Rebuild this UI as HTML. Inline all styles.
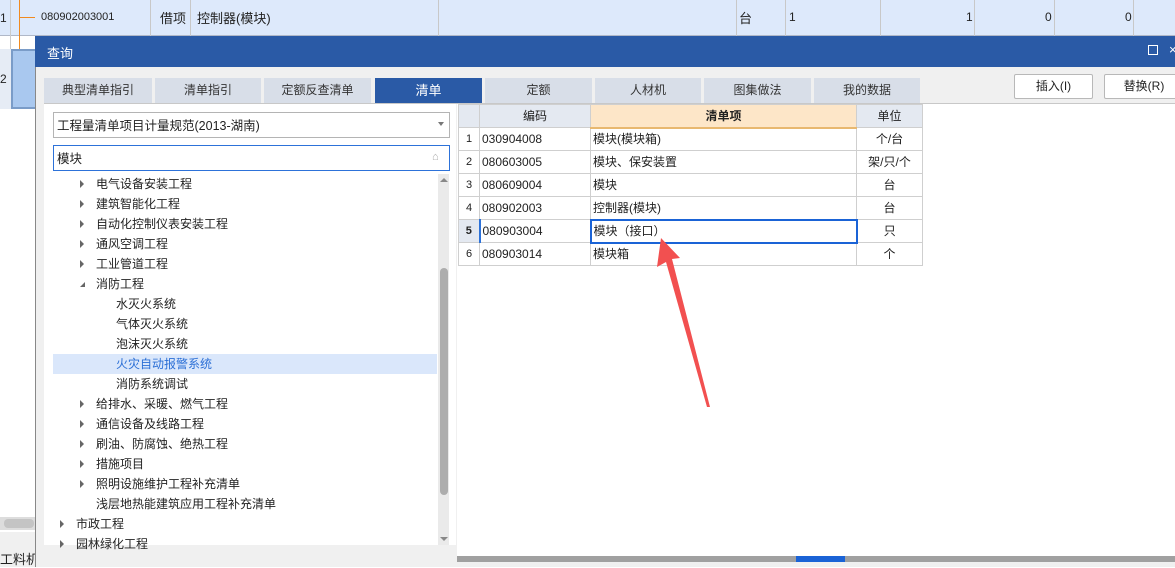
<!DOCTYPE html>
<html><head><meta charset="utf-8"><style>
*{margin:0;padding:0;box-sizing:border-box}
body{width:1175px;height:567px;overflow:hidden;background:#fff;position:relative;font-family:"Liberation Sans","Noto Sans CJK SC",sans-serif;font-size:12px;color:#222}
.a{position:absolute}
.tab{position:absolute;top:78px;height:25px;background:#d8dee8;color:#333;text-align:center;line-height:25px;font-size:12px}
.tr{position:absolute;height:20px;line-height:20px;font-size:12px;color:#222;white-space:nowrap}
.tri{position:absolute;width:0;height:0;border-left:4px solid #666;border-top:4px solid transparent;border-bottom:4px solid transparent;top:6px}
table{border-collapse:collapse;position:absolute;left:458px;top:104px;font-size:12px}
td{border:1px solid #cfcfcf;height:23px;padding:0 2px;white-space:nowrap;line-height:20px}
.btn{position:absolute;top:74px;height:25px;border:1px solid #b8b8b8;background:#fff;text-align:center;line-height:23px;border-radius:2px}
</style></head><body>
<div class="a" style="left:0;top:0;width:1175px;height:36px;background:#dde9fb;border-bottom:1px solid #b0b8c8"></div>
<div class="a" style="left:0;top:11px">1</div>
<div class="a" style="left:10px;top:0;width:1px;height:108px;background:#ccc"></div>
<div class="a" style="left:19px;top:0;width:1px;height:80px;background:#f08a20"></div>
<div class="a" style="left:19px;top:17px;width:16px;height:1px;background:#f08a20"></div>
<div class="a" style="left:41px;top:11px;font-size:11px">080902003001</div>
<div class="a" style="left:150px;top:0;width:1px;height:36px;background:#c8c8c8"></div>
<div class="a" style="left:160px;top:8px;font-size:13px">借项</div>
<div class="a" style="left:190px;top:0;width:1px;height:36px;background:#c8c8c8"></div>
<div class="a" style="left:197px;top:8px;font-size:13px">控制器(模块)</div>
<div class="a" style="left:438px;top:0;width:1px;height:36px;background:#c8c8c8"></div>
<div class="a" style="left:736px;top:0;width:1px;height:36px;background:#c8c8c8"></div>
<div class="a" style="left:739px;top:8px;font-size:13px">台</div>
<div class="a" style="left:785px;top:0;width:1px;height:36px;background:#c8c8c8"></div>
<div class="a" style="left:789px;top:10px">1</div>
<div class="a" style="left:880px;top:0;width:1px;height:36px;background:#c8c8c8"></div>
<div class="a" style="left:966px;top:10px">1</div>
<div class="a" style="left:974px;top:0;width:1px;height:36px;background:#c8c8c8"></div>
<div class="a" style="left:1045px;top:10px">0</div>
<div class="a" style="left:1054px;top:0;width:1px;height:36px;background:#c8c8c8"></div>
<div class="a" style="left:1125px;top:10px">0</div>
<div class="a" style="left:1133px;top:0;width:1px;height:36px;background:#c8c8c8"></div>
<div class="a" style="left:0;top:49px;width:11px;height:60px;background:#e6ecf5"></div>
<div class="a" style="left:0;top:72px">2</div>
<div class="a" style="left:11px;top:49px;width:30px;height:60px;background:#a9c8ef;border:2px solid #7a9cc8"></div>
<div class="a" style="left:0;top:517px;width:36px;height:13px;background:#ddd"></div>
<div class="a" style="left:4px;top:519px;width:30px;height:9px;background:#c4c4c4;border-radius:4px"></div>
<div class="a" style="left:0;top:532px;width:36px;height:35px;background:#f0f0f0"></div>
<div class="a" style="left:0;top:549px;font-size:13px">工料机</div>
<div class="a" style="left:35px;top:36px;width:1140px;height:531px;background:#f0f0f0;border-left:1px solid #888"></div>
<div class="a" style="left:35px;top:36px;width:1140px;height:31px;background:#2a5aa6"></div>
<div class="a" style="left:47px;top:43px;color:#fff;font-size:13px">查询</div>
<div class="a" style="left:1148px;top:45px;width:10px;height:10px;border:1px solid #fff"></div>
<div class="a" style="left:1169px;top:42px;color:#fff;font-size:13px">×</div>
<div class="tab" style="left:44px;width:108px">典型清单指引</div>
<div class="tab" style="left:155px;width:106px">清单指引</div>
<div class="tab" style="left:264px;width:107px">定额反查清单</div>
<div class="tab" style="left:375px;width:107px;background:#2a5aa6;color:#fff;font-size:13px">清单</div>
<div class="tab" style="left:485px;width:107px">定额</div>
<div class="tab" style="left:595px;width:106px">人材机</div>
<div class="tab" style="left:704px;width:107px">图集做法</div>
<div class="tab" style="left:814px;width:106px">我的数据</div>
<div class="a" style="left:44px;top:103px;width:1131px;height:1px;background:#c8c8c8"></div>
<div class="btn" style="left:1014px;width:79px">插入(I)</div>
<div class="btn" style="left:1104px;width:80px">替换(R)</div>
<div class="a" style="left:44px;top:104px;width:412px;height:441px;background:#fff"></div>
<div class="a" style="left:53px;top:112px;width:397px;height:26px;border:1px solid #b4b4b4;padding:2px 3px;font-size:12.5px">工程量清单项目计量规范(2013-湖南)</div>
<div class="a" style="left:438px;top:122px;width:0;height:0;border-top:4px solid #777;border-left:3px solid transparent;border-right:3px solid transparent"></div>
<div class="a" style="left:53px;top:145px;width:397px;height:26px;border:1px solid #2d72d9;padding:2px 3px;font-size:12.5px">模块</div>
<div class="a" style="left:432px;top:151px;color:#aaa;font-size:11px">⌂</div>
<div class="a" style="left:438px;top:174px;width:11px;height:371px;background:#eaeaea"></div>
<div class="a" style="left:440px;top:268px;width:8px;height:227px;background:#adadad;border-radius:4px"></div>
<div class="a" style="left:440px;top:178px;border-bottom:4px solid #888;border-left:4px solid transparent;border-right:4px solid transparent"></div>
<div class="a" style="left:440px;top:537px;border-top:4px solid #888;border-left:4px solid transparent;border-right:4px solid transparent"></div>
<div class="a" style="left:53px;top:354px;width:384px;height:20px;background:#dae7fb"></div>
<div class="tr" style="left:80px;top:174px"><i class="tri" style="left:0"></i><span style="margin-left:16px">电气设备安装工程</span></div>
<div class="tr" style="left:80px;top:194px"><i class="tri" style="left:0"></i><span style="margin-left:16px">建筑智能化工程</span></div>
<div class="tr" style="left:80px;top:214px"><i class="tri" style="left:0"></i><span style="margin-left:16px">自动化控制仪表安装工程</span></div>
<div class="tr" style="left:80px;top:234px"><i class="tri" style="left:0"></i><span style="margin-left:16px">通风空调工程</span></div>
<div class="tr" style="left:80px;top:254px"><i class="tri" style="left:0"></i><span style="margin-left:16px">工业管道工程</span></div>
<div class="tr" style="left:80px;top:274px"><i class="a" style="left:0;top:8px;border-bottom:5px solid #666;border-left:5px solid transparent"></i><span style="margin-left:16px">消防工程</span></div>
<div class="tr" style="left:116px;top:294px">水灭火系统</div>
<div class="tr" style="left:116px;top:314px">气体灭火系统</div>
<div class="tr" style="left:116px;top:334px">泡沫灭火系统</div>
<div class="tr" style="left:116px;top:354px;color:#2b6fd6">火灾自动报警系统</div>
<div class="tr" style="left:116px;top:374px">消防系统调试</div>
<div class="tr" style="left:80px;top:394px"><i class="tri" style="left:0"></i><span style="margin-left:16px">给排水、采暖、燃气工程</span></div>
<div class="tr" style="left:80px;top:414px"><i class="tri" style="left:0"></i><span style="margin-left:16px">通信设备及线路工程</span></div>
<div class="tr" style="left:80px;top:434px"><i class="tri" style="left:0"></i><span style="margin-left:16px">刷油、防腐蚀、绝热工程</span></div>
<div class="tr" style="left:80px;top:454px"><i class="tri" style="left:0"></i><span style="margin-left:16px">措施项目</span></div>
<div class="tr" style="left:80px;top:474px"><i class="tri" style="left:0"></i><span style="margin-left:16px">照明设施维护工程补充清单</span></div>
<div class="tr" style="left:96px;top:494px">浅层地热能建筑应用工程补充清单</div>
<div class="tr" style="left:60px;top:514px"><i class="tri" style="left:0"></i><span style="margin-left:16px">市政工程</span></div>
<div class="tr" style="left:60px;top:534px"><i class="tri" style="left:0"></i><span style="margin-left:16px">园林绿化工程</span></div>
<div class="a" style="left:457px;top:104px;width:718px;height:452px;background:#fff"></div>
<div class="a" style="left:457px;top:556px;width:718px;height:6px;background:#a0a0a0"></div>
<div class="a" style="left:796px;top:556px;width:49px;height:6px;background:#1a63d6"></div>
<table>
<tr style="background:#e4e9f1;text-align:center"><td style="width:21px"></td><td style="width:111px">编码</td><td style="width:266px;background:#fde6c8;font-weight:bold;border-bottom:2px solid #e8b870">清单项</td><td style="width:66px">单位</td></tr>
<tr><td style="text-align:center;font-size:11px">1</td><td>030904008</td><td>模块(模块箱)</td><td style="text-align:center">个/台</td></tr>
<tr><td style="text-align:center;font-size:11px">2</td><td>080603005</td><td>模块、保安装置</td><td style="text-align:center">架/只/个</td></tr>
<tr><td style="text-align:center;font-size:11px">3</td><td>080609004</td><td>模块</td><td style="text-align:center">台</td></tr>
<tr><td style="text-align:center;font-size:11px">4</td><td>080902003</td><td>控制器(模块)</td><td style="text-align:center">台</td></tr>
<tr><td style="text-align:center;font-size:11px;font-weight:bold;background:#e4e9f1;border-right:2px solid #2d72d9">5</td><td>080903004</td><td style="border:2px solid #1a63d6">模块（接口）</td><td style="text-align:center">只</td></tr>
<tr><td style="text-align:center;font-size:11px">6</td><td>080903014</td><td>模块箱</td><td style="text-align:center">个</td></tr>
</table>
<svg class="a" style="left:0;top:0" width="1175" height="567"><polygon points="661,238 680,258 672,259 710,407 707,407 666,262 657,267" fill="#f25050"/></svg>
</body></html>
